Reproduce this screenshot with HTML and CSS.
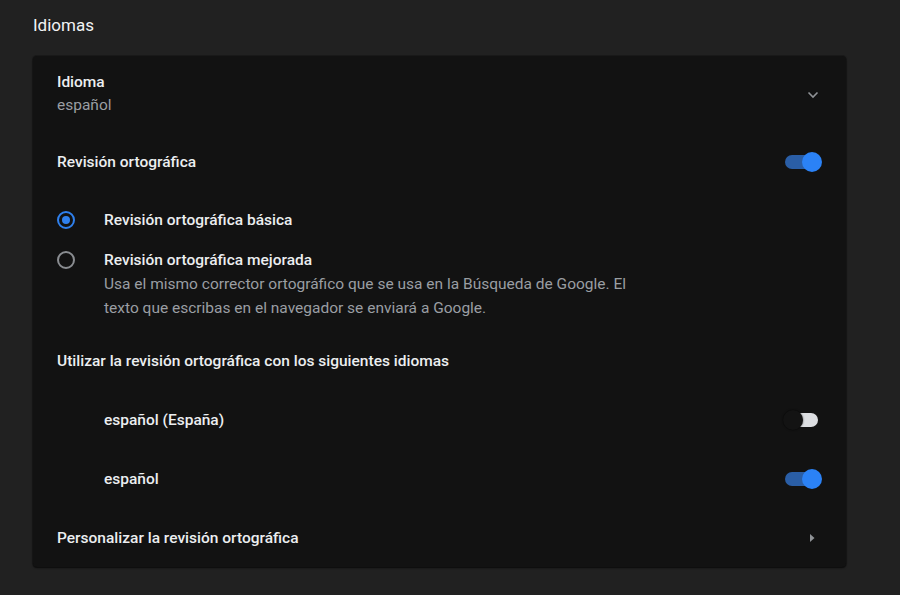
FILE: index.html
```html
<!DOCTYPE html>
<html lang="es">
<head>
    <meta charset="UTF-8">
    <meta name="viewport" content="width=device-width, initial-scale=1.0">
    <title>Idiomas</title>
    <link rel="stylesheet" href="styles.css">
</head>
<body>
    <h2 class="section-title">Idiomas</h2>

    <div class="card">
        <div class="row row-language">
            <div class="labels">
                <div class="label">Idioma</div>
                <div class="sublabel">español</div>
            </div>
            <svg class="chevron" width="12" height="8" viewBox="0 0 12 8">
                <path d="M1.5 1.5 L6 6 L10.5 1.5" fill="none" stroke="#8f9296" stroke-width="1.6"/>
            </svg>
        </div>

        <div class="row row-spell">
            <div class="label">Revisión ortográfica</div>
            <div class="toggle on"><span class="knob"></span></div>
        </div>

        <div class="radio-row radio-basic">
            <span class="radio checked"></span>
            <div class="label">Revisión ortográfica básica</div>
        </div>

        <div class="radio-row radio-enhanced">
            <span class="radio"></span>
            <div class="labels">
                <div class="label">Revisión ortográfica mejorada</div>
                <div class="sublabel">Usa el mismo corrector ortográfico que se usa en la Búsqueda de Google. El<br>texto que escribas en el navegador se enviará a Google.</div>
            </div>
        </div>

        <div class="row row-heading">
            <div class="label">Utilizar la revisión ortográfica con los siguientes idiomas</div>
        </div>

        <div class="row lang-row">
            <div class="label">español (España)</div>
            <div class="toggle off"><span class="knob"></span></div>
        </div>

        <div class="row lang-row">
            <div class="label">español</div>
            <div class="toggle on"><span class="knob"></span></div>
        </div>

        <div class="row row-link">
            <div class="label">Personalizar la revisión ortográfica</div>
            <svg class="arrow" width="8" height="10" viewBox="0 0 8 10">
                <path d="M2 1 L6.5 5 L2 9 Z" fill="#8f9296"/>
            </svg>
        </div>
    </div>
</body>
</html>
```

FILE: styles.css
```css
body {
    background-color: #212121;
    color: #e8eaed;
    font-family: Roboto, "Noto Sans", Arial, sans-serif;
    font-size: 15.5px;
    margin: 0;
    height: 100vh;
}

.section-title {
    margin: 0;
    padding: 13px 0 0 33px;
    height: 44px;
    box-sizing: border-box;
    font-size: 17px;
    font-weight: 400;
    line-height: 24px;
    color: #f1f3f4;
}

.card {
    margin: 12px 0 0 33px;
    width: 813px;
    background-color: #121212;
    border-radius: 4px;
    box-shadow: 0 1px 2px rgba(0, 0, 0, 0.6), 0 0 0 1px #1a1a1a;
}

.row {
    display: flex;
    align-items: center;
    justify-content: space-between;
    padding: 0 24px;
}

.label {
    font-weight: 500;
    line-height: 24px;
    color: #eceef0;
}

.sublabel {
    color: #9a9ea3;
    line-height: 24px;
}

.row-language {
    padding-top: 15px;
    padding-bottom: 14px;
}

.row-language .label,
.row-language .sublabel {
    line-height: 23px;
}

.chevron {
    margin-right: 3px;
    margin-top: 1px;
}

.row-spell {
    height: 61px;
}

.radio-row {
    display: flex;
    align-items: flex-start;
    padding: 0 24px;
}

.radio-basic {
    height: 55px;
    align-items: center;
}

.radio-enhanced {
    padding-top: 1px;
    padding-bottom: 12px;
}

.radio-enhanced .radio {
    margin-top: 3px;
}

.radio {
    width: 18px;
    height: 18px;
    box-sizing: border-box;
    border: 2px solid #8a8d91;
    border-radius: 50%;
    margin-right: 29px;
    flex-shrink: 0;
    position: relative;
}

.radio.checked {
    border-color: #2f80ed;
}

.radio.checked::after {
    content: "";
    position: absolute;
    top: 3px;
    left: 3px;
    width: 8px;
    height: 8px;
    border-radius: 50%;
    background-color: #2f80ed;
}

.row-heading {
    height: 58px;
}

.lang-row {
    height: 59px;
    padding-left: 71px;
}

.row-link {
    height: 58px;
    padding-top: 1px;
}

.arrow {
    margin-right: 6px;
}

.toggle {
    position: relative;
    width: 33px;
    height: 14px;
    margin-right: 4px;
    border-radius: 7px;
    flex-shrink: 0;
}

.toggle.on {
    background-color: #2a5ea6;
}

.toggle.off {
    background-color: #dcdee1;
}

.knob {
    position: absolute;
    top: -3px;
    width: 20px;
    height: 20px;
    border-radius: 50%;
}

.toggle.on .knob {
    right: -4px;
    background-color: #2b82f6;
}

.toggle.off .knob {
    left: -2px;
    background-color: #131313;
    box-shadow: 0 0 2px rgba(0, 0, 0, 0.8);
}
```
